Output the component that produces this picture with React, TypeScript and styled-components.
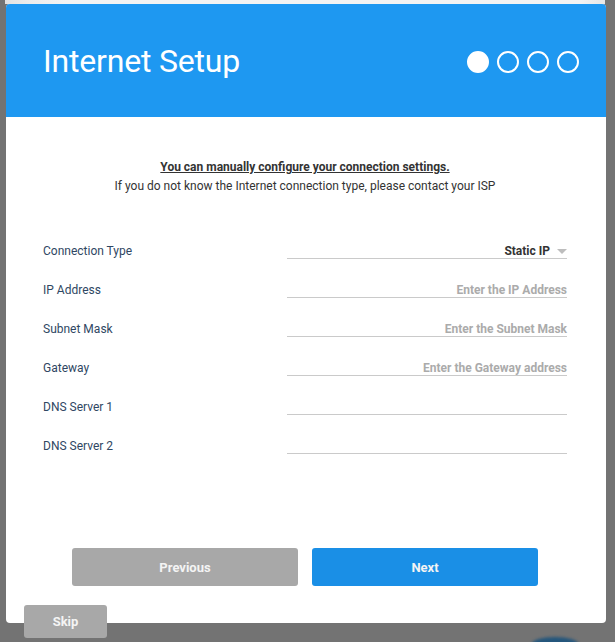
import * as React from 'react';
import styled, { createGlobalStyle } from 'styled-components';

const GlobalStyle = createGlobalStyle`
  html, body {
    margin: 0;
    padding: 0;
    background: #737373;
    font-family: Roboto, "Liberation Sans", Arial, sans-serif;
  }
`;

const Page = styled.div`
  position: relative;
  width: 615px;
  height: 642px;
  overflow: hidden;
  background: #737373;
`;

const BackPanel = styled.div`
  height: 4px;
  margin: 0 10px 0 5px;
  background: linear-gradient(to right, #e2e2e2 0, #ececec 4%, #f3f3f3 10%, #f3f3f3 96%, #e6e6e6 100%);
`;

const Modal = styled.div`
  display: flex;
  flex-direction: column;
  width: 600px;
  height: 619px;
  margin-left: 6px;
  background: #fff;
  border-radius: 4px;
  overflow: hidden;
`;

const Header = styled.header`
  display: flex;
  align-items: center;
  justify-content: space-between;
  height: 113px;
  padding: 0 27px 0 37px;
  background: #1e98f1;
  color: #fff;
  box-sizing: border-box;
`;

const Title = styled.h1`
  margin: 0;
  font-size: 32px;
  font-weight: 400;
  letter-spacing: -0.2px;
`;

const Steps = styled.div`
  display: flex;
  gap: 8px;
  margin-top: 2px;
`;

const Dot = styled.span<{ $active?: boolean }>`
  width: 22px;
  height: 22px;
  border-radius: 50%;
  box-sizing: border-box;
  border: 2px solid #fff;
  background: ${(p) => (p.$active ? '#fff' : 'transparent')};
`;

const Body = styled.div`
  flex: 1;
  display: flex;
  flex-direction: column;
  padding: 41px 39px 0 37px;
`;

const Intro = styled.div`
  text-align: center;
  font-size: 12px;
  line-height: 19px;
  color: #333;
`;

const IntroLead = styled.div`
  font-weight: 700;
  text-decoration: underline;
`;

const Form = styled.div`
  display: flex;
  flex-direction: column;
  margin-top: 35px;
`;

const Row = styled.div`
  display: grid;
  grid-template-columns: 1fr 280px;
  align-items: center;
  height: 39px;
`;

const Label = styled.label`
  padding-top: 1px;
  font-size: 12px;
  color: #2f4763;
`;

const Field = styled.div<{ $value?: boolean }>`
  display: flex;
  align-items: center;
  justify-content: flex-end;
  gap: 7px;
  height: 14px;
  padding-top: 4px;
  margin-bottom: 2px;
  border-bottom: 1px solid #cacaca;
  font-size: 12px;
  font-weight: 700;
  line-height: 14px;
  color: ${(p) => (p.$value ? '#333' : '#ababab')};
`;

const Caret = styled.span`
  width: 0;
  height: 0;
  border-left: 5px solid transparent;
  border-right: 5px solid transparent;
  border-top: 5px solid #bdbdbd;
`;

const Footer = styled.div`
  display: flex;
  gap: 14px;
  padding: 0 0 37px 66px;
  margin-top: auto;
`;

const Button = styled.button<{ $primary?: boolean }>`
  width: 226px;
  height: 38px;
  border: none;
  border-radius: 3px;
  background: ${(p) => (p.$primary ? '#1a8fe6' : '#a8a8a8')};
  color: #f4f4f4;
  font-family: Roboto, "Liberation Sans", Arial, sans-serif;
  font-size: 13px;
  font-weight: 700;
`;

const Skip = styled.button`
  position: absolute;
  left: 24px;
  top: 605px;
  width: 83px;
  height: 33px;
  border: none;
  border-radius: 3px;
  background: #a8a8a8;
  color: #f4f4f4;
  font-family: Roboto, "Liberation Sans", Arial, sans-serif;
  font-size: 13px;
  font-weight: 700;
`;

const Glow = styled.div`
  position: absolute;
  left: 532px;
  top: 637px;
  width: 46px;
  height: 14px;
  border-radius: 50%;
  background: #24567c;
  filter: blur(1.5px);
`;

const fields = [
  { label: 'Connection Type', value: 'Static IP', select: true },
  { label: 'IP Address', placeholder: 'Enter the IP Address' },
  { label: 'Subnet Mask', placeholder: 'Enter the Subnet Mask' },
  { label: 'Gateway', placeholder: 'Enter the Gateway address' },
  { label: 'DNS Server 1', placeholder: '' },
  { label: 'DNS Server 2', placeholder: '' },
];

export default function App() {
  return (
    <Page>
      <GlobalStyle />
      <BackPanel />
      <Modal>
        <Header>
          <Title>Internet Setup</Title>
          <Steps>
            <Dot $active />
            <Dot />
            <Dot />
            <Dot />
          </Steps>
        </Header>
        <Body>
          <Intro>
            <IntroLead>You can manually configure your connection settings.</IntroLead>
            <div>If you do not know the Internet connection type, please contact your ISP</div>
          </Intro>
          <Form>
            {fields.map((f) => (
              <Row key={f.label}>
                <Label>{f.label}</Label>
                <Field $value={f.select}>
                  {f.select ? f.value : f.placeholder}
                  {f.select && <Caret />}
                </Field>
              </Row>
            ))}
          </Form>
        </Body>
        <Footer>
          <Button>Previous</Button>
          <Button $primary>Next</Button>
        </Footer>
      </Modal>
      <Skip>Skip</Skip>
      <Glow />
    </Page>
  );
}
